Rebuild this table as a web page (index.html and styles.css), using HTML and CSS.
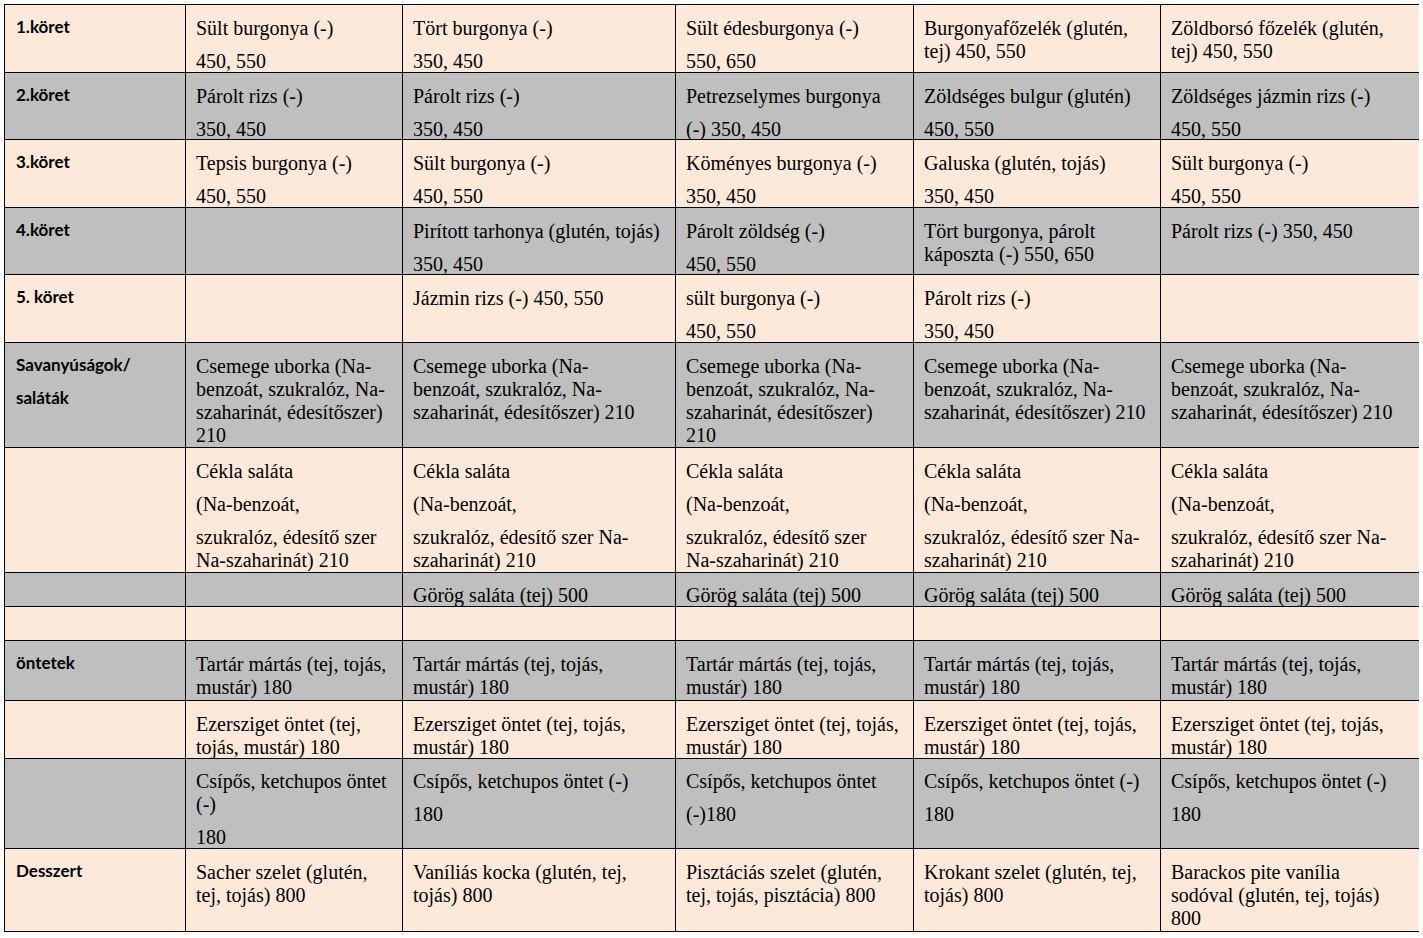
FILE: index.html
```html
<!DOCTYPE html>
<html lang="hu">
<head>
<meta charset="utf-8">
<title>Köretek</title>
<link rel="stylesheet" href="styles.css">
</head>
<body>
<table class="menu">
  <colgroup>
    <col class="c0"><col class="c1"><col class="c2"><col class="c3"><col class="c4"><col class="c5">
  </colgroup>
  <tbody>
    <tr class="peach h68">
      <td class="lbl"><p>1.köret</p></td>
      <td><p>Sült burgonya (-)</p><p>450, 550</p></td>
      <td><p>Tört burgonya (-)</p><p>350, 450</p></td>
      <td><p>Sült édesburgonya (-)</p><p>550, 650</p></td>
      <td><p>Burgonyafőzelék (glutén,<br>tej) 450, 550</p></td>
      <td><p>Zöldborsó főzelék (glutén,<br>tej) 450, 550</p></td>
    </tr>
    <tr class="gray h67">
      <td class="lbl"><p>2.köret</p></td>
      <td><p>Párolt rizs (-)</p><p>350, 450</p></td>
      <td><p>Párolt rizs (-)</p><p>350, 450</p></td>
      <td><p>Petrezselymes burgonya</p><p>(-) 350, 450</p></td>
      <td><p>Zöldséges bulgur (glutén)</p><p>450, 550</p></td>
      <td><p>Zöldséges jázmin rizs (-)</p><p>450, 550</p></td>
    </tr>
    <tr class="peach h68">
      <td class="lbl"><p>3.köret</p></td>
      <td><p>Tepsis burgonya (-)</p><p>450, 550</p></td>
      <td><p>Sült burgonya (-)</p><p>450, 550</p></td>
      <td><p>Köményes burgonya (-)</p><p>350, 450</p></td>
      <td><p>Galuska (glutén, tojás)</p><p>350, 450</p></td>
      <td><p>Sült burgonya (-)</p><p>450, 550</p></td>
    </tr>
    <tr class="gray h67">
      <td class="lbl"><p>4.köret</p></td>
      <td></td>
      <td><p>Pirított tarhonya (glutén, tojás)</p><p>350, 450</p></td>
      <td><p>Párolt zöldség (-)</p><p>450, 550</p></td>
      <td><p>Tört burgonya, párolt<br>káposzta (-) 550, 650</p></td>
      <td><p>Párolt rizs (-) 350, 450</p></td>
    </tr>
    <tr class="peach h68">
      <td class="lbl"><p>5. köret</p></td>
      <td></td>
      <td><p>Jázmin rizs (-) 450, 550</p></td>
      <td><p>sült burgonya (-)</p><p>450, 550</p></td>
      <td><p>Párolt rizs (-)</p><p>350, 450</p></td>
      <td></td>
    </tr>
    <tr class="gray h105">
      <td class="lbl"><p>Savanyúságok/</p><p>saláták</p></td>
      <td><p>Csemege uborka (Na-<br>benzoát, szukralóz, Na-<br>szaharinát, édesítőszer)<br>210</p></td>
      <td><p>Csemege uborka (Na-<br>benzoát, szukralóz, Na-<br>szaharinát, édesítőszer) 210</p></td>
      <td><p>Csemege uborka (Na-<br>benzoát, szukralóz, Na-<br>szaharinát, édesítőszer)<br>210</p></td>
      <td><p>Csemege uborka (Na-<br>benzoát, szukralóz, Na-<br>szaharinát, édesítőszer) 210</p></td>
      <td><p>Csemege uborka (Na-<br>benzoát, szukralóz, Na-<br>szaharinát, édesítőszer) 210</p></td>
    </tr>
    <tr class="peach h125">
      <td class="lbl"></td>
      <td><p>Cékla saláta</p><p>(Na-benzoát,</p><p>szukralóz, édesítő szer<br>Na-szaharinát) 210</p></td>
      <td><p>Cékla saláta</p><p>(Na-benzoát,</p><p>szukralóz, édesítő szer Na-<br>szaharinát) 210</p></td>
      <td><p>Cékla saláta</p><p>(Na-benzoát,</p><p>szukralóz, édesítő szer<br>Na-szaharinát) 210</p></td>
      <td><p>Cékla saláta</p><p>(Na-benzoát,</p><p>szukralóz, édesítő szer Na-<br>szaharinát) 210</p></td>
      <td><p>Cékla saláta</p><p>(Na-benzoát,</p><p>szukralóz, édesítő szer Na-<br>szaharinát) 210</p></td>
    </tr>
    <tr class="gray h34">
      <td class="lbl"></td>
      <td></td>
      <td><p>Görög saláta (tej) 500</p></td>
      <td><p>Görög saláta (tej) 500</p></td>
      <td><p>Görög saláta (tej) 500</p></td>
      <td><p>Görög saláta (tej) 500</p></td>
    </tr>
    <tr class="peach h34">
      <td class="lbl"></td>
      <td></td>
      <td></td>
      <td></td>
      <td></td>
      <td></td>
    </tr>
    <tr class="gray h60">
      <td class="lbl"><p>öntetek</p></td>
      <td><p>Tartár mártás (tej, tojás,<br>mustár) 180</p></td>
      <td><p>Tartár mártás (tej, tojás,<br>mustár) 180</p></td>
      <td><p>Tartár mártás (tej, tojás,<br>mustár) 180</p></td>
      <td><p>Tartár mártás (tej, tojás,<br>mustár) 180</p></td>
      <td><p>Tartár mártás (tej, tojás,<br>mustár) 180</p></td>
    </tr>
    <tr class="peach h58">
      <td class="lbl"></td>
      <td><p>Ezersziget öntet (tej,<br>tojás, mustár) 180</p></td>
      <td><p>Ezersziget öntet (tej, tojás,<br>mustár) 180</p></td>
      <td><p>Ezersziget öntet (tej, tojás,<br>mustár) 180</p></td>
      <td><p>Ezersziget öntet (tej, tojás,<br>mustár) 180</p></td>
      <td><p>Ezersziget öntet (tej, tojás,<br>mustár) 180</p></td>
    </tr>
    <tr class="gray h90">
      <td class="lbl"></td>
      <td><p>Csípős, ketchupos öntet<br>(-)</p><p>180</p></td>
      <td><p>Csípős, ketchupos öntet (-)</p><p>180</p></td>
      <td><p>Csípős, ketchupos öntet</p><p>(-)180</p></td>
      <td><p>Csípős, ketchupos öntet (-)</p><p>180</p></td>
      <td><p>Csípős, ketchupos öntet (-)</p><p>180</p></td>
    </tr>
    <tr class="peach h83">
      <td class="lbl"><p>Desszert</p></td>
      <td><p>Sacher szelet (glutén,<br>tej, tojás) 800</p></td>
      <td><p>Vaníliás kocka (glutén, tej,<br>tojás) 800</p></td>
      <td><p>Pisztáciás szelet (glutén,<br>tej, tojás, pisztácia) 800</p></td>
      <td><p>Krokant szelet (glutén, tej,<br>tojás) 800</p></td>
      <td><p>Barackos pite vanília<br>sodóval (glutén, tej, tojás)<br>800</p></td>
    </tr>
  </tbody>
</table>
</body>
</html>
```
FILE: styles.css
```css
html, body {
  background: #ffffff;
}
body {
  margin: 4px;
  font-family: "Liberation Serif", "Times New Roman", serif;
  color: #000000;
}
.menu {
  border-collapse: collapse;
  table-layout: fixed;
  width: 1417px;
}
.c0 { width: 181px; }
.c1 { width: 217px; }
.c2 { width: 273px; }
.c3 { width: 238px; }
.c4 { width: 247px; }
.c5 { width: 261px; }
.menu td {
  border: 1px solid #000000;
  vertical-align: top;
  padding: 12px 6px 0 10px;
  font-family: "Liberation Serif", "Times New Roman", serif;
  font-size: 20px;
  line-height: 23px;
  white-space: nowrap;
  overflow: hidden;
}
.menu p {
  margin: 0 0 10px 0;
}
.menu p:last-child {
  margin-bottom: -6px;
}
.menu td.lbl {
  font-family: "Lato", "Liberation Sans", sans-serif;
  font-weight: 700;
  font-size: 17px;
  padding-top: 10px;
  padding-left: 11px;
}
.menu .h34 td,
.menu .h90 td {
  padding-top: 11px;
}
.peach td { background: #fde9d9; }
.gray td { background: #bfbfbf; }
.h34 { height: 34px; }
.h58 { height: 58px; }
.h60 { height: 60px; }
.h67 { height: 67px; }
.h68 { height: 68px; }
.h83 { height: 83px; }
.h90 { height: 90px; }
.h105 { height: 105px; }
.h125 { height: 125px; }
```
